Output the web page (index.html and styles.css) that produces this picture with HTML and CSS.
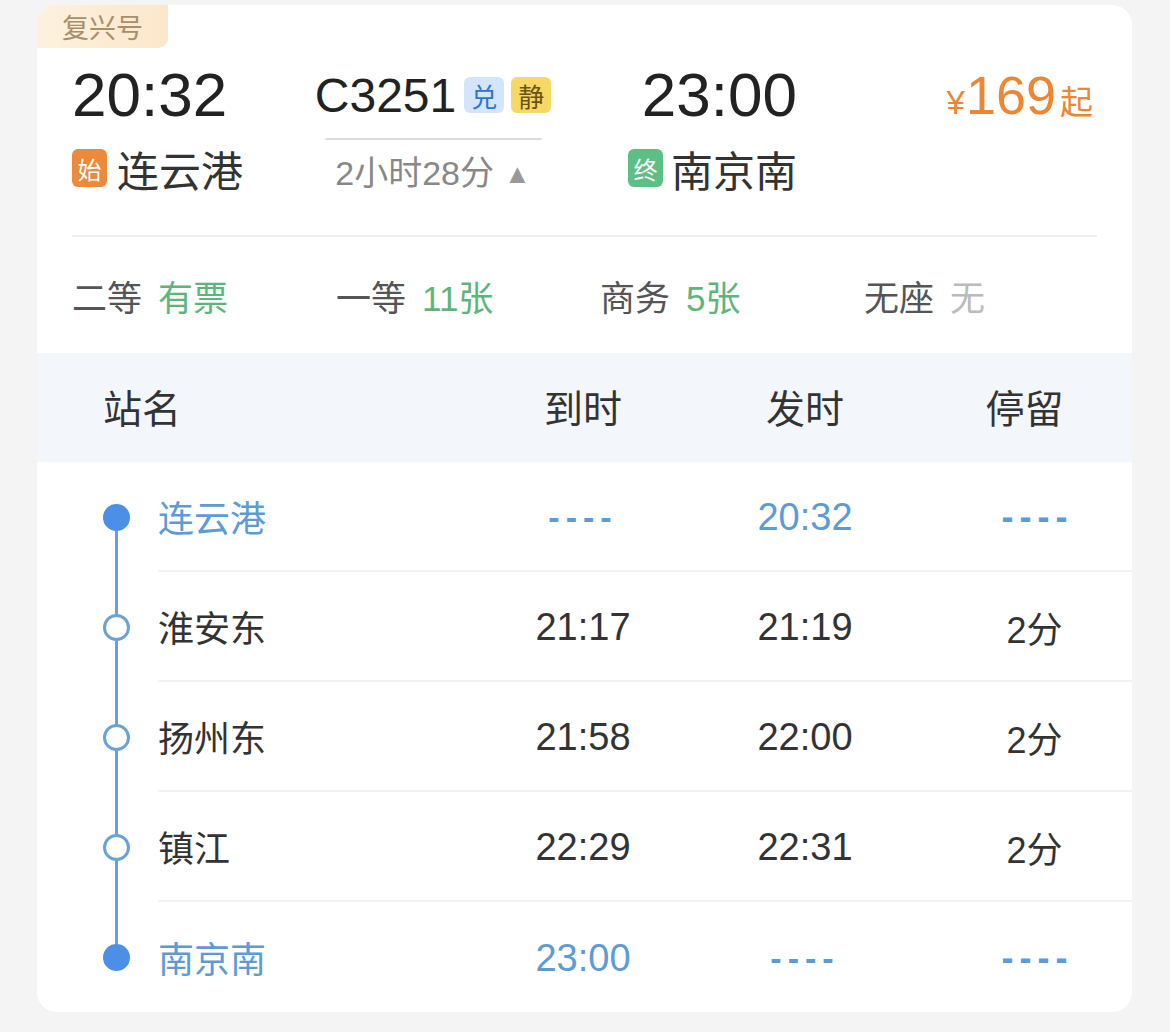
FILE: index.html
```html
<!DOCTYPE html>
<html>
<head>
  <title>C3251 时刻表</title>
  <meta http-equiv="Content-Type" content="text/html;charset=utf-8" />
  <meta name="viewport" content="width=device-width">
  <link rel="stylesheet" href="styles.css">
</head>
<body>
  <div class="card">
    <div class="tag">复兴号</div>

    <div class="summary">
      <div class="time">20:32</div>
      <div class="train">C3251<span class="mark blue">兑</span><span class="mark yellow">静</span></div>
      <div class="time right">23:00</div>
      <div class="price"><span class="yen">¥</span>169<span class="qi">起</span></div>

      <div class="station"><span class="badge start">始</span>连云港</div>
      <div class="duration">
        <div class="rail"></div>
        <div class="dur-text">2小时28分<span class="caret">▲</span></div>
      </div>
      <div class="station right"><span class="badge finish">终</span>南京南</div>
      <div></div>
    </div>

    <div class="divider"></div>

    <div class="seats">
      <div class="seat">二等<span class="left ok">有票</span></div>
      <div class="seat">一等<span class="left ok">11张</span></div>
      <div class="seat">商务<span class="left ok">5张</span></div>
      <div class="seat">无座<span class="left none">无</span></div>
    </div>

    <div class="stops-head">
      <div class="h-name">站名</div>
      <div>到时</div>
      <div>发时</div>
      <div>停留</div>
    </div>

    <div class="stops">
      <div class="stop major">
        <div class="track"><div class="line-col"><div class="seg off"></div><div class="dot filled"></div><div class="seg"></div></div></div>
        <div class="cells">
          <div class="name">连云港</div>
          <div class="dash">----</div>
          <div>20:32</div>
          <div class="dash stay">----</div>
        </div>
      </div>
      <div class="stop">
        <div class="track"><div class="line-col"><div class="seg"></div><div class="dot hollow"></div><div class="seg"></div></div></div>
        <div class="cells">
          <div class="name">淮安东</div>
          <div>21:17</div>
          <div>21:19</div>
          <div class="stay">2分</div>
        </div>
      </div>
      <div class="stop">
        <div class="track"><div class="line-col"><div class="seg"></div><div class="dot hollow"></div><div class="seg"></div></div></div>
        <div class="cells">
          <div class="name">扬州东</div>
          <div>21:58</div>
          <div>22:00</div>
          <div class="stay">2分</div>
        </div>
      </div>
      <div class="stop">
        <div class="track"><div class="line-col"><div class="seg"></div><div class="dot hollow"></div><div class="seg"></div></div></div>
        <div class="cells">
          <div class="name">镇江</div>
          <div>22:29</div>
          <div>22:31</div>
          <div class="stay">2分</div>
        </div>
      </div>
      <div class="stop major last">
        <div class="track"><div class="line-col"><div class="seg"></div><div class="dot filled"></div><div class="seg off"></div></div></div>
        <div class="cells">
          <div class="name">南京南</div>
          <div>23:00</div>
          <div class="dash">----</div>
          <div class="dash stay">----</div>
        </div>
      </div>
    </div>
  </div>
</body>
</html>
```

FILE: styles.css
```css
body {
  margin: 0;
  background: #f4f4f4;
  font-family: "Liberation Sans", "Noto Sans CJK SC", sans-serif;
  color: #333;
}
.card {
  margin: 5px 0 0 37px;
  width: 1095px;
  background: #fff;
  border-radius: 20px;
  overflow: hidden;
}
.tag {
  width: 131px;
  height: 43px;
  display: flex;
  align-items: center;
  justify-content: center;
  background: linear-gradient(90deg, #fdf1de, #fbe7cb);
  border-radius: 0 0 10px 0;
  color: #a88f6b;
  font-size: 27px;
}

/* train summary */
.summary {
  padding: 16px 39px 0 35px;
  display: grid;
  grid-template-columns: 228px 266px 231px 1fr;
  grid-template-rows: 62px 84px;
}
.time {
  font-size: 62px;
  line-height: 62px;
  color: #222;
}
.right { justify-self: end; }
.train {
  justify-self: center;
  align-self: center;
  display: flex;
  align-items: center;
  font-size: 48px;
  color: #222;
}
.mark {
  width: 40px;
  height: 36px;
  border-radius: 6px;
  display: flex;
  align-items: center;
  justify-content: center;
  font-size: 26px;
}
.mark.blue { background: #d3e5fb; color: #2f73cc; margin-left: 8px; }
.mark.yellow { background: #f6d865; color: #6b5410; margin-left: 7px; }
.price {
  justify-self: end;
  line-height: 62px;
  color: #ec8633;
  font-size: 54px;
}
.price .yen { font-size: 33px; margin-right: 1px; }
.price .qi { font-size: 33px; margin-left: 4px; }
.station {
  align-self: center;
  display: flex;
  align-items: center;
  font-size: 42px;
  color: #333;
}
.badge {
  width: 35px;
  height: 38px;
  margin-right: 10px;
  border-radius: 6px;
  display: flex;
  align-items: center;
  justify-content: center;
  color: #fff;
  font-size: 24px;
}
.badge.start { background: #ec8a3b; }
.badge.finish { background: #5cbf86; }
.station.right .badge { margin-right: 8px; }
.duration {
  justify-self: center;
  width: 217px;
}
.rail {
  margin-top: 12px;
  height: 2px;
  background: #dcdcdc;
  border-radius: 1px;
}
.dur-text {
  margin-top: 13px;
  text-align: center;
  font-size: 34px;
  line-height: 40px;
  color: #888;
}
.caret {
  font-size: 27px;
  margin-left: 10px;
  color: #999;
  vertical-align: 2px;
}
.divider {
  margin: 25px 35px 0;
  height: 2px;
  background: #f0f0f0;
}

/* seats */
.seats {
  height: 116px;
  padding-left: 35px;
  display: flex;
  align-items: center;
}
.seat {
  width: 264px;
  font-size: 35px;
  color: #555;
}
.seat .left { margin-left: 16px; }
.seat .ok { color: #5cb67b; }
.seat .none { color: #bbb; }

/* stops table */
.stops-head {
  height: 109px;
  background: #f3f7fc;
  display: grid;
  grid-template-columns: 436px 220px 224px 215px;
  align-items: center;
  text-align: center;
  font-size: 39px;
  color: #333;
}
.stops-head .h-name {
  text-align: left;
  padding-left: 66px;
}
.stops-head > div { margin-top: -4px; }
.stop {
  height: 110px;
  display: flex;
}
.track {
  width: 121px;
  padding-left: 66px;
  box-sizing: border-box;
  display: flex;
}
.line-col {
  width: 27px;
  display: flex;
  flex-direction: column;
  align-items: center;
}
.seg {
  flex: 1;
  width: 3px;
  background: #68a0d8;
}
.seg.off { background: transparent; }
.dot {
  width: 27px;
  height: 27px;
  border-radius: 50%;
  box-sizing: border-box;
  flex: none;
}
.dot.filled { background: #4b8fe6; }
.dot.hollow {
  border: 3px solid #6aa2d8;
  background: #fff;
}
.cells {
  flex: 1;
  display: grid;
  grid-template-columns: 315px 220px 224px 1fr;
  align-items: center;
  text-align: center;
  font-size: 38px;
  color: #333;
  border-bottom: 2px solid #f2f2f2;
}
.cells > div { padding-top: 2px; }
.stop.last .cells { border-bottom: 0; }
.cells .name {
  text-align: left;
  font-size: 36px;
  padding-top: 0;
}
.cells .stay {
  padding-left: 20px;
  font-size: 36px;
}
.stop.major .cells { color: #5c9bd6; }
.dash {
  letter-spacing: 6px;
  font-size: 34px;
  font-weight: bold;
}
.cells .dash.stay { padding-left: 26px; }
```
